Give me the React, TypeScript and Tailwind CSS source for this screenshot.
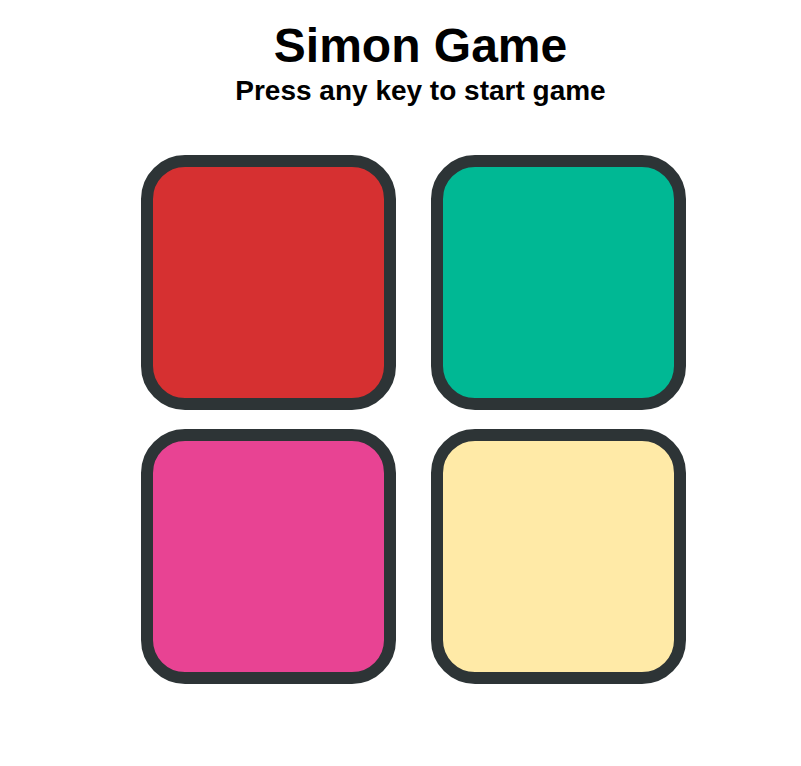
export default function App() {
  const pads = [
    "bg-[#d63031]",
    "bg-[#00b894]",
    "bg-[#e84393]",
    "bg-[#ffeaa7]",
  ];

  return (
    <div className="min-h-[766px] w-full bg-white font-['Liberation_Sans',Arial,sans-serif] text-black">
      <div className="flex flex-col items-center pt-[22px] pl-[40px]">
        <h1 className="text-[48px] font-bold leading-none">Simon Game</h1>
        <h2 className="mt-[7px] text-[28px] font-bold leading-none">
          Press any key to start game
        </h2>
      </div>
      <div className="flex justify-center pt-[50px] pl-[26px]">
        <div className="grid grid-cols-2 gap-x-[35px] gap-y-[19px]">
          {pads.map((c) => (
            <div
              key={c}
              className={`h-[255px] w-[255px] rounded-[44px] border-[12px] border-[#2d3436] ${c}`}
            />
          ))}
        </div>
      </div>
    </div>
  );
}
